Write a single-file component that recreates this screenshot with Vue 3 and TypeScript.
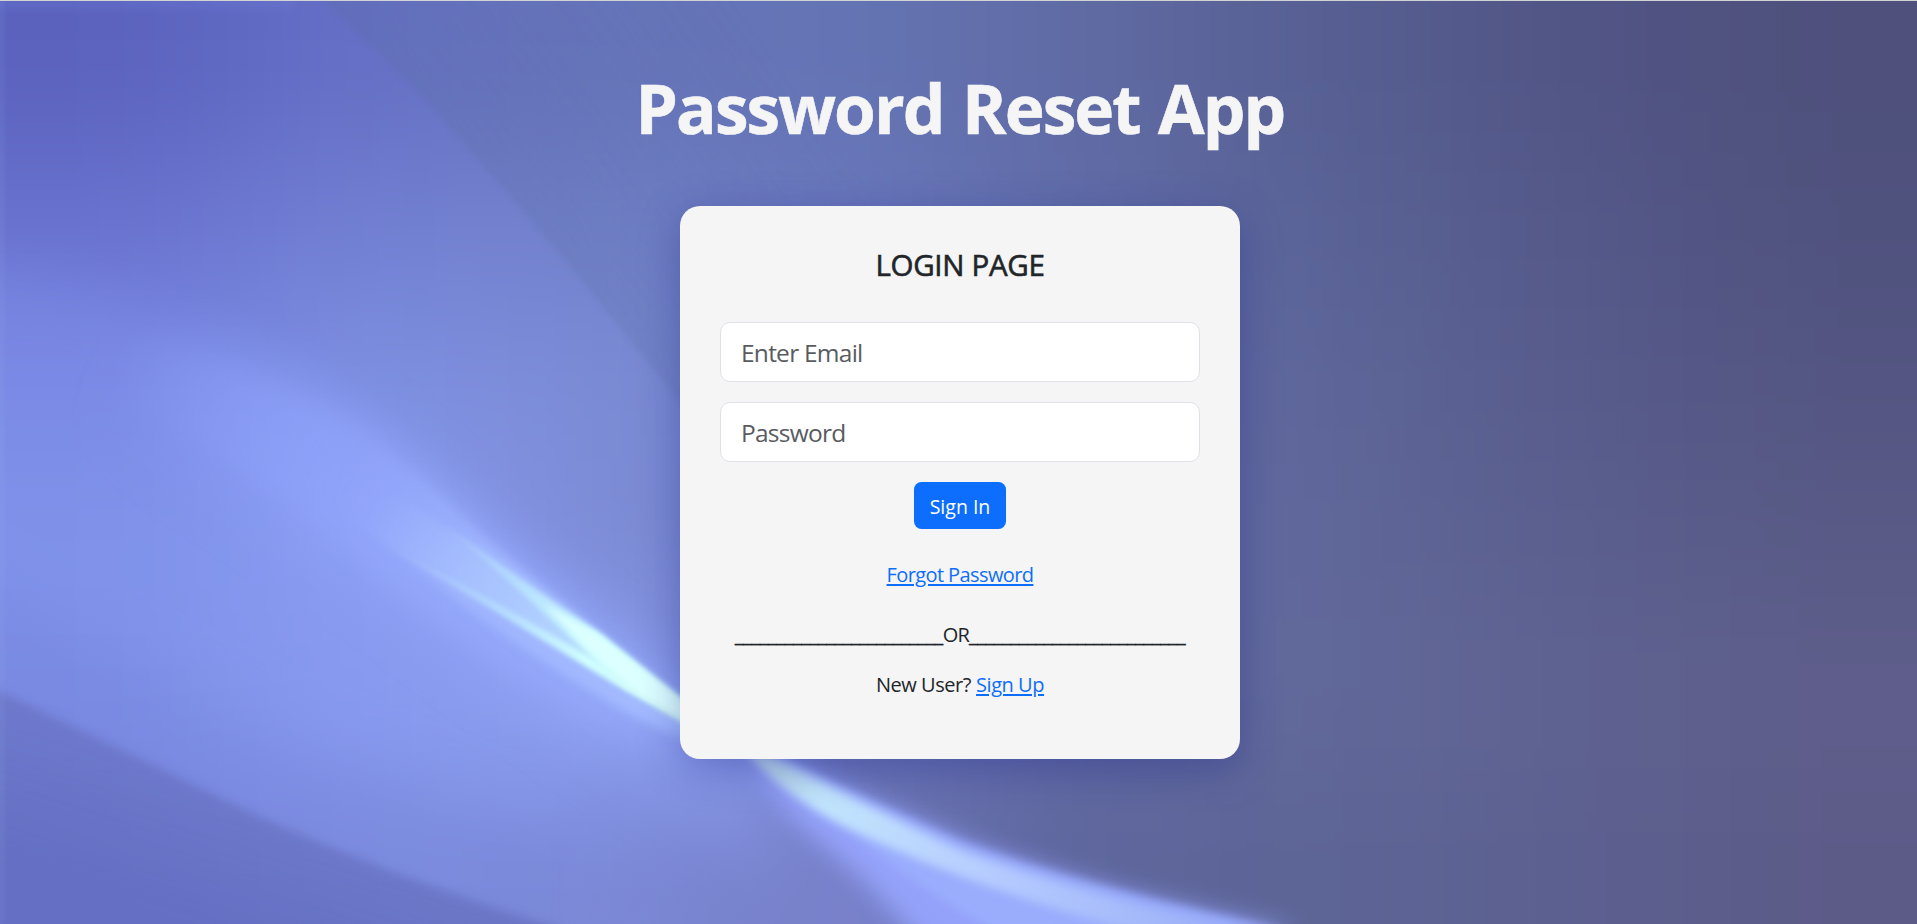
<script setup lang="ts">
import { ref } from 'vue'

const email = ref('')
const password = ref('')

// Colour mesh of the backdrop: rows top to bottom, columns left to right.
const mesh: string[][] = [
  ['#5a62bd', '#6670c7', '#6674ba', '#6474b4', '#606ba4', '#575f92', '#515586', '#4f507c'],
  ['#6a73d0', '#7280d3', '#7482cc', '#6a78be', '#616ca8', '#5a6396', '#54598a', '#50527e'],
  ['#7684e2', '#7e90e2', '#7c8cd6', '#7080c4', '#626ca8', '#5e6699', '#575c8c', '#545582'],
  ['#7c8ee6', '#8a9cf2', '#7e8cd6', '#6e7cc0', '#646eaa', '#606799', '#5a5f8e', '#595a86'],
  ['#7a8ae2', '#8799ee', '#8fa1f2', '#6c78bc', '#6068a2', '#62699a', '#5f6391', '#5f5e8c'],
  ['#7684dc', '#7a8ade', '#7c89d8', '#6a74b6', '#5e669c', '#5d6596', '#5c6090', '#5c5b88'],
]
const cellW = 240
const cellH = 154

interface Cell { x: number; y: number; w: number; h: number; fill: string }
const cells: Cell[] = mesh.flatMap((row, r) =>
  row.map((fill, c) => {
    const left = c === 0 ? -400 : c * cellW
    const right = c === row.length - 1 ? 2320 : (c + 1) * cellW
    const top = r === 0 ? -400 : r * cellH
    const bottom = r === mesh.length - 1 ? 1330 : (r + 1) * cellH
    return { x: left, y: top, w: right - left + 1, h: bottom - top + 1, fill }
  }),
)
</script>

<template>
  <main class="page">
    <svg class="backdrop" viewBox="0 0 1917 924" preserveAspectRatio="none" aria-hidden="true">
      <defs>
        <filter id="mesh" filterUnits="userSpaceOnUse" x="-400" y="-400" width="2720" height="1730" color-interpolation-filters="sRGB">
          <feGaussianBlur stdDeviation="95 65" />
        </filter>
        <filter id="b2" filterUnits="userSpaceOnUse" x="-100" y="-100" width="2100" height="1200" color-interpolation-filters="sRGB"><feGaussianBlur stdDeviation="2.5" /></filter>
        <filter id="b5" filterUnits="userSpaceOnUse" x="-100" y="-100" width="2100" height="1200" color-interpolation-filters="sRGB"><feGaussianBlur stdDeviation="5" /></filter>
        <filter id="b12" filterUnits="userSpaceOnUse" x="-100" y="-100" width="2100" height="1200" color-interpolation-filters="sRGB"><feGaussianBlur stdDeviation="12" /></filter>
        <filter id="b24" filterUnits="userSpaceOnUse" x="-200" y="-200" width="2300" height="1400" color-interpolation-filters="sRGB"><feGaussianBlur stdDeviation="26" /></filter>
        <linearGradient id="fold" gradientUnits="userSpaceOnUse" x1="470" y1="160" x2="720" y2="-20">
          <stop offset="0" stop-color="#5a6ea0" stop-opacity=".24" />
          <stop offset="1" stop-color="#5a6ea0" stop-opacity="0" />
        </linearGradient>
        <linearGradient id="dusk" gradientUnits="userSpaceOnUse" x1="240" y1="800" x2="200" y2="924">
          <stop offset="0" stop-color="#5f66b4" stop-opacity=".48" />
          <stop offset="1" stop-color="#5a62b4" stop-opacity=".62" />
        </linearGradient>
        <linearGradient id="haze" gradientUnits="userSpaceOnUse" x1="110" y1="370" x2="440" y2="520">
          <stop offset="0" stop-color="#90a4ff" stop-opacity="0" />
          <stop offset=".6" stop-color="#92a6ff" stop-opacity=".7" />
          <stop offset="1" stop-color="#98acff" stop-opacity=".85" />
        </linearGradient>
        <linearGradient id="wedge" gradientUnits="userSpaceOnUse" x1="350" y1="460" x2="680" y2="710">
          <stop offset="0" stop-color="#94a8ff" stop-opacity="0" />
          <stop offset=".4" stop-color="#a2b8ff" stop-opacity=".8" />
          <stop offset="1" stop-color="#a4bcff" stop-opacity=".95" />
        </linearGradient>
        <linearGradient id="core" gradientUnits="userSpaceOnUse" x1="375" y1="505" x2="640" y2="690">
          <stop offset="0" stop-color="#a8c4ff" stop-opacity="0" />
          <stop offset=".6" stop-color="#b2d2ff" stop-opacity=".8" />
          <stop offset="1" stop-color="#c0f0f8" />
        </linearGradient>
        <linearGradient id="streak" gradientUnits="userSpaceOnUse" x1="390" y1="520" x2="680" y2="710">
          <stop offset="0" stop-color="#b0ccff" stop-opacity="0" />
          <stop offset=".4" stop-color="#b8e4ff" stop-opacity=".75" />
          <stop offset=".7" stop-color="#d0ffff" />
          <stop offset="1" stop-color="#d2f6f4" />
        </linearGradient>
        <linearGradient id="under" gradientUnits="userSpaceOnUse" x1="600" y1="740" x2="800" y2="880">
          <stop offset="0" stop-color="#8292e2" stop-opacity="0" />
          <stop offset="1" stop-color="#7a84ce" stop-opacity=".85" />
        </linearGradient>
        <linearGradient id="tail" gradientUnits="userSpaceOnUse" x1="730" y1="750" x2="1260" y2="930">
          <stop offset="0" stop-color="#b0ccd8" />
          <stop offset=".18" stop-color="#c2e6fc" />
          <stop offset=".5" stop-color="#b6ccff" />
          <stop offset="1" stop-color="#98acf6" />
        </linearGradient>
      </defs>

      <g filter="url(#mesh)">
        <rect v-for="(cell, i) in cells" :key="i" :x="cell.x" :y="cell.y" :width="cell.w" :height="cell.h" :fill="cell.fill" />
      </g>

      <path d="M300 -20 Q345 20 425 100 Q540 225 690 415 L1100 415 L1100 -20 Z" fill="url(#fold)" filter="url(#b2)" />

      <!-- light falling under the beam -->
      <path d="M-60 260 Q200 290 400 450 L800 760 L800 890 Q400 820 -60 560 Z" fill="#8ea2f8" opacity=".22" filter="url(#b24)" />
      <path d="M60 280 Q260 320 410 452 L760 770 L780 870 Q560 740 400 610 Q200 480 60 410 Z" fill="url(#haze)" opacity=".5" filter="url(#b24)" />
      <path d="M120 330 Q300 370 425 476 Q540 576 720 732 L760 800 Q520 690 400 590 Q260 470 120 400 Z" fill="url(#haze)" opacity=".65" filter="url(#b12)" />
      <path d="M350 425 Q420 474 487 540 Q600 632 700 714 L700 748 Q560 690 340 510 Z" fill="url(#wedge)" filter="url(#b5)" />

      <!-- bright core -->
      <path d="M370 478 Q480 548 560 606 L690 708 L690 724 L600 672 Q500 610 370 536 Z" fill="url(#core)" filter="url(#b5)" />
      <path d="M360 530 Q460 582 537 626 L620 674 L700 718 L700 732 L612 682 Q530 632 467 594 Q420 566 360 530 Z" fill="url(#streak)" filter="url(#b2)" />
      <path d="M440 522 Q500 564 556 604 L600 633 L700 714 L700 726 L625 688 L560 628 Q500 572 440 522 Z" fill="url(#streak)" filter="url(#b2)" />
      <path d="M545 605 L596 634 L692 710 L692 722 L640 694 L588 648 Z" fill="#dcffff" filter="url(#b2)" />

      <path d="M-40 672 Q120 748 250 812 Q410 885 580 934 L580 1000 L-40 1000 Z" fill="url(#dusk)" filter="url(#b5)" />

      <!-- lower continuation of the beam -->
      <path d="M560 700 L782 760 Q870 800 960 842 Q1090 890 1280 930 L560 980 Z" fill="url(#under)" filter="url(#b5)" />
      <path d="M740 740 L784 760 Q880 805 966 842 Q1100 892 1300 932 L960 990 Q880 890 824 846 Q780 810 752 770 Z" fill="#98a6ff" opacity=".9" filter="url(#b12)" />
      <path d="M745 745 L784 760 Q880 806 966 844 Q1100 892 1290 932 L1000 934 Q920 890 850 832 Q790 796 762 766 Z" fill="#9cb0ff" opacity=".8" filter="url(#b5)" />
      <path d="M742 745 L778 760 Q870 808 960 850 Q1080 894 1240 930 L1130 930 Q980 890 860 834 Q800 806 756 762 Z" fill="url(#tail)" filter="url(#b5)" />

      <rect x="0" y="0" width="3" height="924" fill="#9cb4ec" opacity=".22" filter="url(#b2)" />
      <rect x="-20" y="0" width="315" height="7" fill="#7080dc" opacity=".4" filter="url(#b5)" />
      <rect x="0" y="0" width="1917" height="1" fill="#d0d4d4" />
    </svg>

    <div class="content">
      <h1 class="title">Password Reset App</h1>
      <form class="card" @submit.prevent>
        <h2 class="heading">LOGIN PAGE</h2>
        <input v-model="email" class="field" type="email" placeholder="Enter Email" />
        <input v-model="password" class="field" type="password" placeholder="Password" />
        <button class="submit" type="submit">Sign In</button>
        <a class="link forgot" href="#">Forgot Password</a>
        <p class="divider"><span class="rule">_________________________</span><span class="or">OR</span><span class="rule">__________________________</span></p>
        <p class="signup"><span>New User?</span><a class="link" href="#">Sign Up</a></p>
      </form>
    </div>
  </main>
</template>

<style>
body {
  margin: 0;
  overflow: hidden;
}
</style>

<style scoped>
.page {
  position: relative;
  height: 100vh;
  overflow: hidden;
  font-family: "Open Sans", "Noto Sans", sans-serif;
  font-size: 20px;
  line-height: 30px;
  color: #212529;
}
.backdrop {
  position: absolute;
  inset: 0;
  width: 100%;
  height: 100%;
}
.content {
  position: relative;
  display: flex;
  flex-direction: column;
  align-items: center;
  padding-left: 3px;
}
.title {
  margin: 66px 0 0;
  height: 140px;
  font-size: 67.5px;
  line-height: 84px;
  font-weight: 700;
  letter-spacing: -1.9px;
  word-spacing: 2.8px;
  color: #f5f5f5;
  -webkit-text-stroke: 0.6px #f5f5f5;
  white-space: nowrap;
}
.card {
  box-sizing: border-box;
  width: 560px;
  height: 553px;
  padding: 40px;
  display: flex;
  flex-direction: column;
  align-items: center;
  border-radius: 20px;
  background: #f5f5f5;
  box-shadow: 0 10px 40px rgba(31, 38, 135, 0.37);
}
.heading {
  margin: 1px 0 41px;
  font-size: 29.5px;
  line-height: 36px;
  height: 34px;
  font-weight: 500;
  letter-spacing: -0.3px;
  -webkit-text-stroke: 0.6px #212529;
}
.field {
  box-sizing: border-box;
  width: 480px;
  height: 60px;
  margin: 0 0 20px;
  padding: 10px 20px;
  border: 1px solid #dee2e6;
  border-radius: 10px;
  background: #fff;
  font-family: inherit;
  font-size: 24.5px;
  letter-spacing: -0.75px;
  color: #212529;
  outline: none;
}
.field::placeholder {
  color: #595c5f;
  opacity: 1;
}
.submit {
  box-sizing: border-box;
  width: 92px;
  height: 47px;
  padding: 2px 0 0;
  border: 0;
  border-radius: 7.5px;
  background: #0d6efd;
  color: #fff;
  font-family: inherit;
  font-size: 19.5px;
  line-height: 30px;
  white-space: nowrap;
}
.link {
  color: #0d6efd;
  text-decoration: underline;
  text-decoration-thickness: 2px;
  text-underline-offset: 2px;
}
.forgot {
  margin-top: 31px;
  letter-spacing: -0.6px;
}
.divider {
  margin: 30px 0 0;
  white-space: nowrap;
}
.rule {
  letter-spacing: -0.44px;
  -webkit-text-stroke: 0.3px #212529;
}
.or {
  letter-spacing: -0.9px;
}
.signup {
  display: flex;
  gap: 5px;
  margin: 20px 0 0;
  letter-spacing: -0.45px;
}
</style>
